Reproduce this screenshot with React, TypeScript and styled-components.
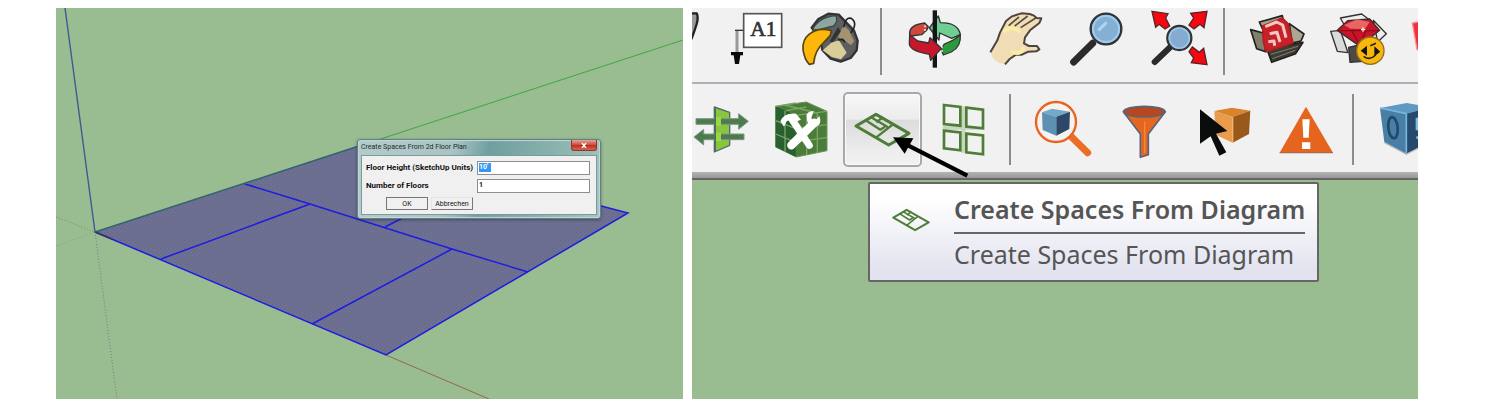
import React from 'react';
import styled, { createGlobalStyle } from 'styled-components';

const GlobalStyle = createGlobalStyle`
  *, *::before, *::after { box-sizing: border-box; }
  body { margin: 0; background: #fff; }
`;

const Page = styled.main`
  display: grid;
  grid-template-columns: minmax(0, 627fr) minmax(0, 726fr);
  gap: 9px;
  padding: 8px 71px 8px 56px;
`;

/* ---------- model view ---------- */

const Scene = styled.section`
  position: relative;
  overflow: hidden;
  background: #9abc91;
`;

const SceneDrawing = styled.svg`
  display: block;
  width: 100%;
  height: auto;
`;

const Dialog = styled.form`
  position: absolute;
  left: 48%;
  top: 131px;
  width: 244px;
  padding: 0 3px 3px;
  border: 1px solid #5f8187;
  border-radius: 3px;
  background: linear-gradient(100deg, #b4cbcb 0, #a9c4c2 38%, #6f9f9f 52%, #86b0ac 75%, #a6c4bf 100%);
  box-shadow: inset 0 0 1px 1px #c5d8d8, 0 1px 3px rgba(30, 40, 60, 0.5);
  font-family: Roboto, "Liberation Sans", sans-serif;
`;

const TitleBar = styled.header`
  display: flex;
  justify-content: space-between;
  align-items: flex-start;
  height: 15px;
`;

const DialogTitle = styled.h2`
  margin: 0;
  font: 400 7px/15px Roboto, "Liberation Sans", sans-serif;
  color: #1c2b2e;
`;

const CloseButton = styled.button`
  display: grid;
  place-items: center;
  width: 26px;
  height: 11px;
  padding: 0;
  border: 1px solid #8a3a33;
  border-top: 0;
  border-radius: 0 0 3px 3px;
  background: linear-gradient(#e2a79c, #cf5443 45%, #b92d1c 50%, #d9634f);
`;

const DialogBody = styled.div`
  display: flex;
  flex-direction: column;
  gap: 4px;
  padding: 5px 6px 4px 4px;
  border: 1px solid #7a9a9c;
  background: #f0f0f0;
`;

const Field = styled.div`
  display: flex;
  align-items: center;
  justify-content: space-between;
`;

const FieldLabel = styled.label`
  font-size: 8px;
  line-height: 14px;
  font-weight: 700;
  color: #111;
  white-space: nowrap;
`;

const FieldInput = styled.input<{ $selected?: boolean }>`
  width: 113px;
  height: 14px;
  padding: 0 1px 3px;
  border: 1px solid #8c8e94;
  border-radius: 0;
  outline: 0;
  font: 700 7px/10px Roboto, "Liberation Sans", sans-serif;
  color: ${p => (p.$selected ? '#fff' : '#111')};
  background: ${p =>
    p.$selected ? 'linear-gradient(#3397f5, #3397f5) 1px 1px / 12px 9px no-repeat #fff' : '#fff'};
`;

const DialogActions = styled.div`
  display: flex;
  gap: 3px;
  padding-left: 20px;
`;

const DialogButton = styled.button<{ $primary?: boolean }>`
  width: 42px;
  height: 13px;
  padding: 0;
  border: 1px solid ${p => (p.$primary ? '#777' : '#e4e4e4')};
  border-right-color: #777;
  border-bottom-color: #777;
  background: #f0f0f0;
  font: 400 7px/10px Roboto, "Liberation Sans", sans-serif;
  color: #111;
`;

/* ---------- toolbars ---------- */

const Workspace = styled.section`
  display: flex;
  flex-direction: column;
  min-width: 0;
  overflow: hidden;
  background: #9abc91;
`;

const Toolbar = styled.div<{ $lower?: boolean }>`
  display: flex;
  align-items: stretch;
  padding: ${p => (p.$lower ? '8px 0 5px' : '0')};
  margin-left: ${p => (p.$lower ? '-12px' : '-60px')};
  background: ${p => (p.$lower ? 'linear-gradient(#f0f2f8, #f1f1f1 6px)' : '#f1f1f1')};
  border-bottom: ${p => (p.$lower ? '0' : '2px solid #b0b0b0')};
`;

const ToolbarEdge = styled.div`
  height: 8px;
  border-bottom: 2px solid #646464;
  background: linear-gradient(#b4b4b4, #a6a6a6 3px, #999);
`;

const ToolButton = styled.button<{ $active?: boolean }>`
  flex: none;
  position: relative;
  z-index: ${p => (p.$active ? 1 : 0)};
  width: 79px;
  margin: 0 1px;
  padding: 0;
  border: 0;
  border-radius: 5px;
  background: ${p => (p.$active ? 'linear-gradient(#f8f8f8, #ececec 36%, #dcdcdc 38%, #ededed 80%, #f3f3f3)' : 'transparent')};
  box-shadow: ${p => (p.$active ? 'inset 0 0 0 2px #a8a8a8, inset 0 0 0 3px #fafafa' : 'none')};
`;

const ToolIcon = styled.svg`
  display: block;
  width: 100%;
  overflow: visible;
`;

const Separator = styled.div<{ $lower?: boolean }>`
  flex: none;
  width: 2px;
  margin: ${p => (p.$lower ? '2px 12px 2px 5px' : '0 12px 7px 5px')};
  background: #8c8c8c;
`;

const Canvas = styled.div`
  position: relative;
  flex: 1;
  min-height: 104px;
`;

const Tooltip = styled.div`
  position: absolute;
  left: 176px;
  top: 2px;
  display: flex;
  align-items: flex-start;
  gap: 24px;
  height: 100px;
  padding: 9px 12px 0 22px;
  border: 2px solid #666;
  border-radius: 2px;
  background: linear-gradient(#fff 15%, #e2e3ef 90%);
  font-family: "Noto Sans", "Open Sans", sans-serif;
  color: #555;
  white-space: nowrap;
`;

const TooltipIcon = styled.svg`
  flex: none;
  width: 38px;
  height: 24px;
  margin-top: 15px;
`;

const TooltipTitle = styled.strong`
  display: block;
  padding-bottom: 7px;
  border-bottom: 2px solid #666;
  font-size: 25px;
  line-height: 32px;
  font-weight: 600;
`;

const TooltipText = styled.span`
  display: block;
  padding-top: 4px;
  font-size: 25px;
  line-height: 32px;
`;

/* ---------- icons ---------- */

type Tool = { name: string; x: number; art: React.ReactNode; active?: boolean } | null;

const ink = '#333';

const plan = (
  <g fill="none" stroke="#4d7d37" strokeWidth="9" strokeLinejoin="round">
    <path d="M48 123 108 88 207 145 146 180Z" />
    <path d="M108 158 160 117M76 105l45 29 14-9M92 96l51 30M109 112l20-16" strokeWidth="7" />
  </g>
);

const upperTools: Tool[] = [
  {
    name: 'Dimensions',
    x: -171,
    art: (
      <path d="M4 40h16q6 12 0 32T4 118" fill="#999" stroke="#222" strokeWidth="7" />
    ),
  },
  {
    name: 'Text',
    x: 72,
    art: (
      <g>
        <path d="M141 91v70" fill="none" stroke="#999" strokeWidth="9" />
        <path d="M162 91h-27" stroke="#333" strokeWidth="4" />
        <path d="M123 156h36v10h-8l-4 26h-12l-4-26h-8z" fill="#0a0a0a" />
        <rect x="161" y="41" width="114" height="101" fill="#fff" stroke="#555" strokeWidth="5" />
        <text x="181" y="108" fontFamily="Liberation Serif, serif" fontWeight="400" fontSize="64" fill="#333" stroke="#333" strokeWidth="2">A1</text>
      </g>
    ),
  },
  {
    name: 'Paint Bucket',
    x: 315,
    art: (
      <g strokeLinejoin="round">
        <path d="M365 83 384 58 415 41 446 44 469 68 492 92 503 122 500 151 482 174 452 185 422 176 397 150 390 110Z" fill="#5d5e60" stroke={ink} strokeWidth="7" />
        <path d="M398 151 424 128 447 121 470 158 453 178 425 171Z" fill="#d9cd9a" />
        <path d="M444 111 461 75 478 92 486 111 493 123 483 136 463 121Z" fill="#a3946f" />
        <path d="M367 90Q385 52 437 47Q446 61 431 78L387 89Z" fill="#8ca7a1" stroke="#3c4644" strokeWidth="4" />
        <path d="M419 125 444 81 452 94 429 126Z" fill="#303132" />
        <path d="M444 120l14-2 7 9M461 82Q466 50 484 55Q505 70 482 99" fill="none" stroke="#222" strokeWidth="5" />
        <path d="M424 92Q385 80 357 103Q337 119 339 148Q343 178 358 193L371 190Q375 150 401 128L421 106Z" fill="#fdb60a" stroke="#594515" strokeWidth="5" />
      </g>
    ),
  },
  null,
  {
    name: 'Orbit',
    x: 75,
    art: (
      <g stroke={ink} strokeWidth="4" strokeLinejoin="round">
        <path d="M119 102Q117 75 164 69L175 80 170 91 155 104 123 108Z" fill="#cf493a" />
        <path d="M178 84 205 48 211 68Q265 68 271 104L245 115 209 99 207 120Z" fill="#6fce91" />
        <path d="M271 103Q274 141 244 156L220 165 213 148 223 132Q260 118 271 103Z" fill="#2d983d" />
        <path d="M188 31h13v172h-13z" fill="#161616" stroke="none" />
        <path d="M119 104 143 123 176 129 180 113 214 145 182 181 178 163Q121 154 118 132Z" fill="#c8172d" />
        <path d="M165 76v23M216 139v22" stroke="#fff" strokeDasharray="6 5" />
      </g>
    ),
  },
  {
    name: 'Pan',
    x: 318,
    art: (
      <g>
        <path d="M361 157 382 121 390 98 408 63 426 49 454 40 479 42 492 47 500 54 514 55 508 69 480 91 465 112 462 130 477 138 501 138 508 148 499 154 475 155 456 164 438 164 419 177 405 193Q371 191 361 157Z" fill="#f0dcb5" />
        <path d="M361 157 382 121 390 98 408 63 426 49 454 40 479 42 492 47 500 54 514 55 508 69 480 91 465 112 462 130 477 138 501 138 508 148 499 154 475 155 456 164 438 164 419 177 405 193" fill="none" stroke="#4c453b" strokeWidth="6" strokeLinejoin="round" />
        <path d="M416 77 447 51M434 78 473 48M452 83 497 54" stroke="#564c3f" strokeWidth="5" />
        <path d="M404 93Q427 76 447 94M427 156Q449 166 459 146" fill="none" stroke="#f8eda5" strokeWidth="11" strokeLinecap="round" />
      </g>
    ),
  },
  {
    name: 'Zoom',
    x: 21,
    art: (
      <g>
        <path d="M71 186 128 130" stroke="#2b2b2b" strokeWidth="21" strokeLinecap="round" />
        <circle cx="168" cy="87" r="46" fill="#86afd4" stroke={ink} strokeWidth="7" />
        <circle cx="168" cy="87" r="39" fill="none" stroke="#9ccdf2" strokeWidth="6" />
        <path d="M145 91 170 67" stroke="#a9d5f6" strokeWidth="9" />
      </g>
    ),
  },
  {
    name: 'Zoom Extents',
    x: 264,
    art: (
      <g>
        <path d="M314 186 361 141" stroke="#2b2b2b" strokeWidth="18" strokeLinecap="round" />
        <g fill="#f7070f" stroke="#54252a" strokeWidth="4">
          <path d="M306 34 354 41 347 54 359 78 345 87 327 73 317 82Z" />
          <path d="M471 34 422 40 431 54 417 75 432 87 450 73 462 83Z" />
          <path d="M471 194 424 188 431 174 417 155 427 141 448 157 461 145Z" />
        </g>
        <circle cx="388" cy="114" r="36" fill="#86abd0" stroke={ink} strokeWidth="7" />
        <circle cx="388" cy="114" r="30" fill="none" stroke="#98c9ed" strokeWidth="5" />
      </g>
    ),
  },
  null,
  {
    name: 'Get Models',
    x: 24,
    art: (
      <g stroke="#20201d" strokeWidth="5" strokeLinejoin="round">
        <path d="M62 89 100 99 107 155 80 146Z" fill="#81806d" />
        <path d="M88 66 157 47 160 64 100 92Z" fill="#a5a28c" />
        <path d="M178 71 222 102 213 123 186 129Z" fill="#aaa892" />
        <path d="M110 145 219 127 197 161 125 187Z" fill="#3d3c34" />
        <path d="M122 163 204 139M127 176 195 151" stroke="#817e6c" strokeWidth="3" />
        <path d="M98 78 157 54 174 71 189 129 109 155 100 126Z" fill="#c72027" stroke="#b51e22" />
        <path d="M106 80 140 66 158 75 168 113M119 101l22-4 9 29M115 125l17-2 2 14" fill="none" stroke="#f5c7c3" strokeWidth="9" />
      </g>
    ),
  },
  {
    name: 'Extension Warehouse',
    x: 267,
    art: (
      <g stroke="#35302f" strokeWidth="4" strokeLinejoin="round">
        <path d="M302 94 331 91 354 158 322 154Z" fill="#dadada" />
        <path d="M331 54 395 42 427 66 350 87Z" fill="#eee" />
        <path d="M430 61 469 101 443 126Z" fill="#eee" />
        <path d="M356 142 415 128 401 184 360 187Z" fill="#4e4943" />
        <path d="M322 91 353 62 419 57 449 91 390 139Z" fill="#c91428" />
        <path d="M342 75 382 58 419 66 405 87 362 86Z" fill="#e86564" stroke="none" />
        <path d="M322 92H447M365 91 390 137 408 91" stroke="#8e0a1a" fill="none" />
        <path d="M399 82v13M393 89h13" stroke="#fff3c8" strokeWidth="4" />
        <circle cx="421" cy="152" r="41" fill="#f9b60b" stroke="#8e7020" />
        <path d="M392 152 411 137v30zM451 155 433 139v30z" fill="#151515" stroke="none" />
        <path d="M401 169q18 14 36-4M421 137l17-7" fill="none" stroke="#222" strokeWidth="5" />
      </g>
    ),
  },
  {
    name: 'Send to LayOut',
    x: 510,
    art: <path d="M547 69 600 59V149H561Z" fill="#f22f3d" stroke="#fa9298" strokeWidth="4" />,
  },
];

const lowerTools: Tool[] = [
  {
    name: 'Surface Matching',
    x: -27,
    art: (
      <g strokeLinejoin="round">
        <path d="M73 66 119 82V181L73 201Z" fill="#8ac63d" stroke="#536a6c" strokeWidth="4" />
        <path d="M18 101H146V86L175 109 146 133V118H18ZM162 147H41V133L12 156 41 180V164H162Z" fill="#4d7b4b" stroke="#7c9786" strokeWidth="3" />
        <path d="M76 70V198" stroke="#496b66" strokeWidth="4" />
        <path d="M78 97h15v25H78zM78 143h15v25H78z" fill="#9bd744" />
      </g>
    ),
  },
  {
    name: 'Model Tools',
    x: 216,
    art: (
      <g strokeLinejoin="round">
        <path d="M257 64 349 51 411 79V197L319 216 257 186Z" fill="#4b7c39" stroke="#6a9857" strokeWidth="3" />
        <path d="M257 64 317 91V215L257 186Z" fill="#286032" />
        <path d="M257 107 317 131 411 119M257 147 317 172 411 157M285 77V201M350 87V210M382 84V204M283 60 382 84M317 91 411 79M317 54 257 64M288 77 349 66" fill="none" stroke="#7aa666" strokeWidth="4" />
        <path d="M304 181 373 113" stroke="#fff" strokeWidth="25" strokeLinecap="round" />
        <path d="M350 94Q349 79 371 78L364 99 372 111 388 93Q397 117 379 124Q350 130 350 94Z" fill="#fff" />
        <path d="M358 181 307 105" stroke="#fff" strokeWidth="21" strokeLinecap="round" />
        <path d="M271 109Q282 82 318 86L333 104 312 112 304 104 290 109 282 125Z" fill="#fff" />
      </g>
    ),
  },
  {
    name: 'Create Spaces From Diagram',
    x: 9,
    active: true,
    art: (
      <g>
        {plan}
        <path d="M198 178 382 272" stroke="#000" strokeWidth="13" />
        <path d="M159 157 220 160 194 206Z" fill="#000" />
      </g>
    ),
  },
  {
    name: 'Project Loose Geometry',
    x: 252,
    art: (
      <g fill="none" stroke="#4d7d37" strokeWidth="8">
        <path d="M370 64V203M308 128H430" stroke="#c7d5c1" strokeWidth="12" />
        <g fill="#f1f1f1">
          <path d="M312 60 361 66V122L312 117Z" />
          <path d="M379 68 429 74V130L379 125Z" />
          <path d="M312 137 361 142V196L312 190Z" />
          <path d="M379 146 429 151V208L379 202Z" />
        </g>
      </g>
    ),
  },
  null,
  {
    name: 'Inspector',
    x: 42,
    art: (
      <g>
        <path d="M178 149 233 203" stroke="#ec6d25" strokeWidth="21" strokeLinecap="round" />
        <circle cx="138" cy="111" r="60" fill="#f6f2ef" stroke="#e8641f" strokeWidth="7" />
        <path d="M96 82 126 71 180 80 139 95Z" fill="#75a9c8" />
        <path d="M96 82 139 95V152L98 135Z" fill="#5c91b3" />
        <path d="M180 80 139 95V152L178 132Z" fill="#2b4868" />
      </g>
    ),
  },
  {
    name: 'Render by Filter',
    x: 285,
    art: (
      <g stroke="#58637c" strokeWidth="5" strokeLinejoin="round">
        <path d="M340 80 391 147V217L415 209V147L466 80Z" fill="#e5671f" />
        <ellipse cx="403" cy="80" rx="62" ry="16" fill="#b54721" />
        <path d="M404 110V204" stroke="#f28a3e" strokeWidth="4" />
      </g>
    ),
  },
  {
    name: 'Select',
    x: -42,
    art: (
      <g>
        <path d="M43 78 96 68 151 77 98 96Z" fill="#d9832d" />
        <path d="M43 78 98 96V173L47 149Z" fill="#e99c4b" />
        <path d="M151 77 98 96V173L147 147Z" fill="#98591b" />
        <path d="M98 97V171" stroke="#f5b36b" strokeWidth="4" />
        <path d="M0 73 82 138 48 146 79 202 58 212 32 154 0 176Z" fill="#0b0d0c" />
      </g>
    ),
  },
  {
    name: 'Warnings',
    x: 201,
    art: (
      <g>
        <path d="M318 65 399 203H239Z" fill="#e5651e" />
        <path d="M239 203H399" stroke="#ad684d" strokeWidth="4" />
        <path d="M307 103h22l-3 55h-16zM306 172h25v20h-25z" fill="#fff" />
      </g>
    ),
  },
  null,
  {
    name: 'Online Help',
    x: 501,
    art: (
      <g>
        <path d="M540 69 620 54 690 66 619 86Z" fill="#5d9ac3" />
        <path d="M540 69 619 86V206L553 171Z" fill="#477fa7" />
        <path d="M619 86 690 66V170L619 206Z" fill="#254a6b" />
        <path d="M619 86V205M540 69 619 86" stroke="#79b6da" strokeWidth="5" />
        <path d="M553 173 619 208 690 172" stroke="#aaa" strokeWidth="3" fill="none" />
        <ellipse cx="579" cy="128" rx="14" ry="32" fill="none" stroke="#244965" strokeWidth="8" transform="rotate(-6 579 128)" />
        <path d="M675 102H651V132H675V158H649" fill="none" stroke="#83bddd" strokeWidth="8" />
      </g>
    ),
  },
];

function ToolbarRow({ label, tools, lower }: { label: string; tools: Tool[]; lower?: boolean }) {
  return (
    <Toolbar role="toolbar" aria-label={label} $lower={lower}>
      {tools.map((tool, i) =>
        tool ? (
          <ToolButton key={tool.name} type="button" aria-label={tool.name} $active={tool.active}>
            <ToolIcon viewBox={lower ? `${tool.x} 21 237 225` : `${tool.x} 24 237 222`}>{tool.art}</ToolIcon>
          </ToolButton>
        ) : (
          <Separator key={i} $lower={lower} />
        ),
      )}
    </Toolbar>
  );
}

function ModelView() {
  return (
    <Scene>
      <SceneDrawing viewBox="56 8 627 391">
        <defs>
          <pattern id="dither" width="4" height="4" patternUnits="userSpaceOnUse">
            <rect width="4" height="4" fill="#6e708f" />
            <path d="M0 0h1v1H0zM2 2h1v1H2z" fill="#616297" />
          </pattern>
        </defs>
        <g fill="none" strokeWidth="1" strokeDasharray="1 2">
          <path d="M56 217 95 232" stroke="#8a8a64" />
          <path d="M56 246 95 232" stroke="#78a870" />
          <path d="M95 232 117 399" stroke="#6b8088" />
        </g>
        <path d="M350 149 683 40" stroke="#3fa83c" strokeWidth="1" />
        <path d="M386 355 489 399" stroke="#8e6c44" strokeWidth="1" />
        <path d="M65 8 95 232" stroke="#3d5a92" strokeWidth="1.4" />
        <path d="M95 232 365 144 628 213 386 355Z" fill="url(#dither)" />
        <g fill="none" stroke="#1d1de0" strokeWidth="1.5">
          <path d="M365 144 628 213 386 355 95 232" />
          <path d="M245 184 310 204 452 249 528 272M161 259 310 204M312 324 452 249M385 227 420 209" />
        </g>
        <path d="M95 232 365 144" stroke="#2f6470" strokeWidth="1.5" />
        <path d="M95 232 112 239" stroke="#3c3560" strokeWidth="1.5" />
      </SceneDrawing>
      <Dialog onSubmit={e => e.preventDefault()}>
        <TitleBar>
          <DialogTitle>Create Spaces From 2d Floor Plan</DialogTitle>
          <CloseButton type="button" aria-label="Close">
            <svg width="6" height="5" viewBox="0 0 6 5">
              <path d="M1 0 5 5M5 0 1 5" stroke="#fff" strokeWidth="1.5" />
            </svg>
          </CloseButton>
        </TitleBar>
        <DialogBody>
          <Field>
            <FieldLabel htmlFor="height">Floor Height (SketchUp Units)</FieldLabel>
            <FieldInput id="height" defaultValue="10'" $selected />
          </Field>
          <Field>
            <FieldLabel htmlFor="floors">Number of Floors</FieldLabel>
            <FieldInput id="floors" defaultValue="1" />
          </Field>
          <DialogActions>
            <DialogButton type="submit" $primary>OK</DialogButton>
            <DialogButton type="button">Abbrechen</DialogButton>
          </DialogActions>
        </DialogBody>
      </Dialog>
    </Scene>
  );
}

export default function App() {
  return (
    <>
      <GlobalStyle />
      <Page>
        <ModelView />
        <Workspace>
          <ToolbarRow label="Standard tools" tools={upperTools} />
          <ToolbarRow label="Space tools" tools={lowerTools} lower />
          <ToolbarEdge />
          <Canvas>
            <Tooltip role="tooltip">
              <TooltipIcon viewBox="42 82 171 104">{plan}</TooltipIcon>
              <div>
                <TooltipTitle>Create Spaces From Diagram</TooltipTitle>
                <TooltipText>Create Spaces From Diagram</TooltipText>
              </div>
            </Tooltip>
          </Canvas>
        </Workspace>
      </Page>
    </>
  );
}
